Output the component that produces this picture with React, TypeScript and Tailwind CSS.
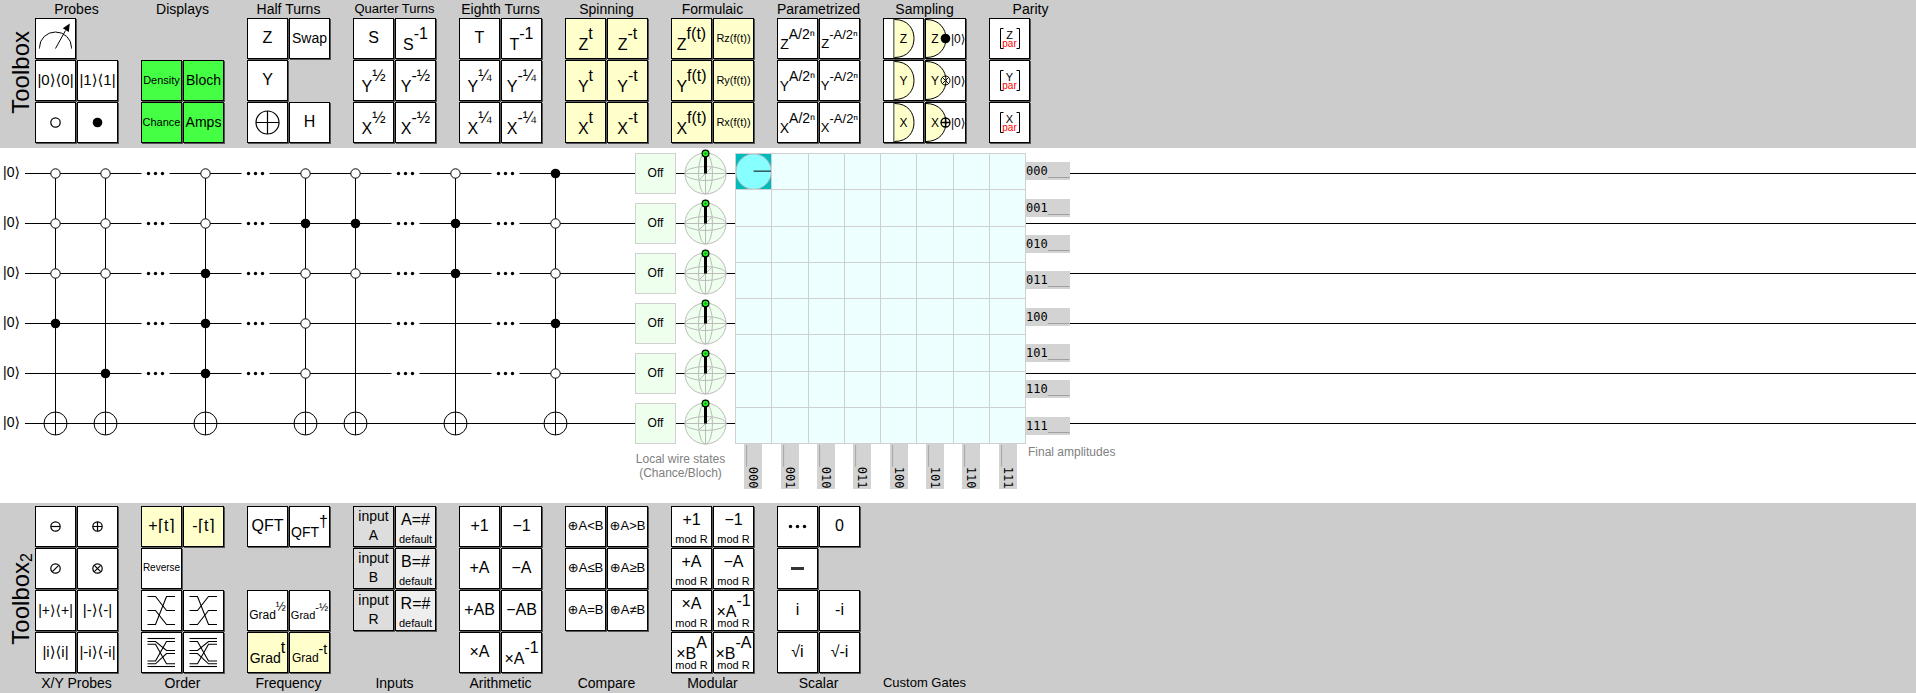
import React from "react";

type Gate = {
  t?: string;
  sup?: string;
  sub?: string;
  size?: string;
  supSize?: string;
  drop?: string;
  bg?: string;
  art?: React.ReactNode;
  name?: string;
} | null;

type Group = { title: string; titleSize?: string; gates: Gate[] };

const YELLOW = "bg-[#ffffcc]";
const GREEN = "bg-[#44ff44]";
const INPUT = "bg-[#dddddd]";
const DEFAULT = "bg-[#eeeeee]";

function Art({ children }: { children: React.ReactNode }) {
  return (
    <svg viewBox="0 0 39 39" className="block h-[39px] w-[39px]" fill="none" stroke="black" aria-hidden="true">
      {children}
    </svg>
  );
}

const dot = (
  <Art>
    <circle cx="19.5" cy="19.5" r="4.8" fill="black" stroke="none" />
  </Art>
);

function Circled({ d, r = 4.7 }: { d?: string; r?: number }) {
  return (
    <Art>
      <circle cx="19.5" cy="19.5" r={r} strokeWidth="1.2" />
      {d && <path d={d} strokeWidth="1.2" />}
    </Art>
  );
}

function Meter() {
  return (
    <Art>
      <path d="M3.5 29.5V28.5A16 15.5 0 0 1 35.5 28.5V29.5" />
      <path d="M19.5 29.5L29.5 11.5" />
      <path d="M33.8 4.5L32.8 13L26.8 9.2Z" fill="black" stroke="none" />
    </Art>
  );
}

function Wires({ left, right }: { left: number[]; right: number[] }) {
  return (
    <Art>
      {left.map((y, i) => (
        <path key={i} d={`M5.5 ${y}H13.5L24.5 ${right[i]}H33`} strokeWidth="1.1" />
      ))}
    </Art>
  );
}

const svgText = "fill-black stroke-none font-['Liberation_Sans','DejaVu_Sans',sans-serif]";

function Detector({ axis }: { axis: string }) {
  return (
    <Art>
      <path d="M10 0.5H13A17.5 19 0 0 1 13 38.5H10Z" fill="#ffffcc" stroke="none" />
      <path d="M10 0V39" stroke="#777" strokeWidth="2" />
      <path d="M10.5 0.5C24 0.5 30 10 30 19.5S24 38.5 10.5 38.5" fill="#ffffcc" />
      <text x="19.5" y="24" textAnchor="middle" className={`text-[12px] ${svgText}`}>{axis}</text>
    </Art>
  );
}

function ResetDetector({ axis, mark }: { axis: string; mark: React.ReactNode }) {
  return (
    <Art>
      <path d="M0 0.5C13.5 0.5 20 10 20 19.5S13.5 38.5 0 38.5" fill="#ffffcc" />
      <text x="9" y="24" textAnchor="middle" className={`text-[12px] ${svgText}`}>{axis}</text>
      {mark}
      <text x="25" y="24" className={`text-[12px] ${svgText}`}>|0⟩</text>
    </Art>
  );
}

function Parity({ axis }: { axis: string }) {
  return (
    <Art>
      <path d="M13.5 9.5H10.5V29.5H13.5M26.5 9.5H29.5V29.5H26.5" />
      <text x="19.5" y="20" textAnchor="middle" className={`text-[11px] ${svgText}`}>{axis}</text>
      <text x="19.5" y="28" textAnchor="middle" className="fill-[#ff0000] stroke-none text-[10px] font-['Liberation_Sans',sans-serif]">par</text>
    </Art>
  );
}

const topGroups: Group[] = [
  {
    title: "Probes",
    gates: [
      { art: <Meter />, name: "Measure" }, null,
      { t: "|0⟩⟨0|", size: "text-[15px]" }, { t: "|1⟩⟨1|", size: "text-[15px]" },
      { art: <Circled />, name: "Anti-control" }, { art: dot, name: "Control" },
    ],
  },
  {
    title: "Displays",
    gates: [
      null, null,
      { t: "Density", size: "text-[11px]", bg: GREEN }, { t: "Bloch", size: "text-[14px]", bg: GREEN },
      { t: "Chance", size: "text-[11px]", bg: GREEN }, { t: "Amps", size: "text-[14px]", bg: GREEN },
    ],
  },
  {
    title: "Half Turns",
    gates: [
      { t: "Z" }, { t: "Swap", size: "text-[14px]" },
      { t: "Y" }, null,
      { art: <Circled r={11.5} d="M8 19.5H31M19.5 8V31" />, name: "Not" }, { t: "H" },
    ],
  },
  {
    title: "Quarter Turns",
    titleSize: "text-[13px]",
    gates: [
      { t: "S" }, { t: "S", sup: "-1" },
      { t: "Y", sup: "½" }, { t: "Y", sup: "-½" },
      { t: "X", sup: "½" }, { t: "X", sup: "-½" },
    ],
  },
  {
    title: "Eighth Turns",
    gates: [
      { t: "T" }, { t: "T", sup: "-1" },
      { t: "Y", sup: "¼" }, { t: "Y", sup: "-¼" },
      { t: "X", sup: "¼" }, { t: "X", sup: "-¼" },
    ],
  },
  {
    title: "Spinning",
    gates: ["Z", "Y", "X"].flatMap((a): Gate[] => [
      { t: a, sup: "t", bg: YELLOW }, { t: a, sup: "-t", bg: YELLOW },
    ]),
  },
  {
    title: "Formulaic",
    gates: ["Z", "Y", "X"].flatMap((a): Gate[] => [
      { t: a, sup: "f(t)", bg: YELLOW }, { t: `R${a.toLowerCase()}(f(t))`, size: "text-[11px]", bg: YELLOW },
    ]),
  },
  {
    title: "Parametrized",
    gates: ["Z", "Y", "X"].flatMap((a): Gate[] => [
      { t: a, sup: "A/2ⁿ", size: "text-[14px]", supSize: "text-[14px]", drop: "pt-[10px]" },
      { t: a, sup: "-A/2ⁿ", size: "text-[13px]", supSize: "text-[13px]", drop: "pt-[9px]" },
    ]),
  },
  {
    title: "Sampling",
    gates: [
      { art: <Detector axis="Z" />, name: "Z detector" },
      { art: <ResetDetector axis="Z" mark={<circle cx="19.5" cy="19.5" r="4.8" fill="black" stroke="none" />} />, name: "Z detector with reset" },
      { art: <Detector axis="Y" />, name: "Y detector" },
      { art: <ResetDetector axis="Y" mark={<path d="M15 19.5a4.5 4.5 0 1 0 9 0a4.5 4.5 0 1 0 -9 0M16.3 16.3L22.7 22.7M16.3 22.7L22.7 16.3" />} />, name: "Y detector with reset" },
      { art: <Detector axis="X" />, name: "X detector" },
      { art: <ResetDetector axis="X" mark={<path d="M15 19.5a4.5 4.5 0 1 0 9 0a4.5 4.5 0 1 0 -9 0M15 19.5H24M19.5 15V24" strokeWidth="1.3" />} />, name: "X detector with reset" },
    ],
  },
  {
    title: "Parity",
    gates: [
      { art: <Parity axis="Z" />, name: "Z parity" }, null,
      { art: <Parity axis="Y" />, name: "Y parity" }, null,
      { art: <Parity axis="X" />, name: "X parity" }, null,
    ],
  },
];

const THREE = [5.5, 19.5, 33.5];
const SPLIT = [5.5, 8.5, 11.2, 28, 30.8, 33.5];
const WOVEN = [5.5, 17.5, 30.8, 8.5, 20.5, 33.5];

const bottomGroups: Group[] = [
  {
    title: "X/Y Probes",
    gates: [
      { art: <Circled d="M15 19.5H24" />, name: "Minus control" }, { art: <Circled d="M15 19.5H24M19.5 15V24" />, name: "Plus control" },
      { art: <Circled d="M16.3 22.7L22.7 16.3" />, name: "Anti cross control" }, { art: <Circled d="M16.3 22.7L22.7 16.3M16.3 16.3L22.7 22.7" />, name: "Cross control" },
      { t: "|+⟩⟨+|", size: "text-[14px]" }, { t: "|-⟩⟨-|", size: "text-[15px]" },
      { t: "|i⟩⟨i|", size: "text-[15px]" }, { t: "|-i⟩⟨-i|", size: "text-[15px]" },
    ],
  },
  {
    title: "Order",
    gates: [
      { t: "+⌈t⌉", bg: YELLOW }, { t: "-⌈t⌉", bg: YELLOW },
      { t: "Reverse", size: "text-[10px]" }, null,
      { art: <Wires left={THREE} right={[19.5, 33.5, 5.5]} />, name: "Rotate down" },
      { art: <Wires left={THREE} right={[33.5, 5.5, 19.5]} />, name: "Rotate up" },
      { art: <Wires left={SPLIT} right={WOVEN} />, name: "Interleave" },
      { art: <Wires left={WOVEN} right={SPLIT} />, name: "Deinterleave" },
    ],
  },
  {
    title: "Frequency",
    gates: [
      { t: "QFT" }, { t: "QFT", sup: "†", size: "text-[14px]", drop: "pt-[10px]" },
      null, null,
      { t: "Grad", sup: "½", size: "text-[12px]", supSize: "text-[12px]", drop: "pt-[8px]" },
      { t: "Grad", sup: "-½", size: "text-[11px]", supSize: "text-[11px]", drop: "pt-[8px]" },
      { t: "Grad", sup: "t", size: "text-[14px]", bg: YELLOW, drop: "pt-[10px]" },
      { t: "Grad", sup: "-t", size: "text-[12px]", supSize: "text-[14px]", bg: YELLOW, drop: "pt-[9px]" },
    ],
  },
  {
    title: "Inputs",
    gates: ["A", "B", "R"].flatMap((a): Gate[] => [
      { t: "input", sub: a, size: "text-[14px]", bg: INPUT }, { t: `${a}=#`, sub: "default", bg: DEFAULT },
    ]),
  },
  {
    title: "Arithmetic",
    gates: [
      { t: "+1" }, { t: "−1" }, { t: "+A" }, { t: "−A" },
      { t: "+AB" }, { t: "−AB" }, { t: "×A" }, { t: "×A", sup: "-1" },
    ],
  },
  {
    title: "Compare",
    gates: ["<", ">", "≤", "≥", "=", "≠"].map((op): Gate => ({ t: `⊕A${op}B`, size: "text-[13px]" })),
  },
  {
    title: "Modular",
    gates: [
      { t: "+1", sub: "mod R" }, { t: "−1", sub: "mod R" },
      { t: "+A", sub: "mod R" }, { t: "−A", sub: "mod R" },
      { t: "×A", sub: "mod R" }, { t: "×A", sup: "-1", sub: "mod R" },
      { t: "×B", sup: "A", sub: "mod R" }, { t: "×B", sup: "-A", sub: "mod R" },
    ],
  },
  {
    title: "Scalar",
    gates: [
      {
        art: (
          <Art>
            <g fill="black" stroke="none">
              <circle cx="12.5" cy="19.5" r="1.7" />
              <circle cx="19.5" cy="19.5" r="1.7" />
              <circle cx="26.5" cy="19.5" r="1.7" />
            </g>
          </Art>
        ),
        name: "Spacer",
      },
      { t: "0" },
      { art: <Art><path d="M13 19.5H26" stroke="#333" strokeWidth="3" /></Art>, name: "Identity" }, null,
      { t: "i" }, { t: "-i" },
      { t: "√i" }, { t: "√-i" },
    ],
  },
  { title: "Custom Gates", titleSize: "text-[13px]", gates: [] },
];

function GateFace({ gate }: { gate: NonNullable<Gate> }) {
  if (gate.art) return <>{gate.art}</>;
  const size = gate.size ?? "text-[16px]";
  const power = gate.sup && (
    <span className="flex items-start pt-px">
      <span className={`${gate.drop ?? "pt-[11px]"} ${size}`}>{gate.t}</span>
      <span className={gate.supSize ?? "text-[16px]"}>{gate.sup}</span>
    </span>
  );
  if (gate.sub) {
    const caption = gate.sub === "default" || gate.sub === "mod R";
    return (
      <span className={`flex h-full flex-col items-center justify-between pb-px ${caption ? "pt-[5px]" : "pt-px"}`}>
        {gate.sup ? <span className="-mt-1 -mb-3">{power}</span> : <span className={size}>{gate.t}</span>}
        {caption ? (
          <span className="text-[11px] leading-[12px]">{gate.sub}</span>
        ) : (
          <span className={`pb-[2px] ${size}`}>{gate.sub}</span>
        )}
      </span>
    );
  }
  return power || <span className={`pb-[2px] ${size}`}>{gate.t}</span>;
}

function GateGroup({ group, titleBelow }: { group: Group; titleBelow?: boolean }) {
  return (
    <section className={`flex w-[83px] shrink-0 items-center ${titleBelow ? "flex-col-reverse justify-start gap-[2px]" : "flex-col gap-px"}`}>
      <h2 className={`whitespace-nowrap leading-4 ${group.titleSize ?? "text-[14px]"}`}>{group.title}</h2>
      <div className="grid w-full flex-1 auto-rows-[41px] grid-cols-[41px_41px] gap-px">
        {group.gates.map((gate, i) =>
          gate ? (
            <button
              key={i}
              type="button"
              aria-label={gate.name}
              className={`flex items-center justify-center overflow-visible whitespace-nowrap border border-black leading-4 shadow-[1px_1px_0_#555] ${gate.bg ?? "bg-white"}`}
            >
              <GateFace gate={gate} />
            </button>
          ) : (
            <span key={i} />
          ),
        )}
      </div>
    </section>
  );
}

function Toolbox({ label, groups, titleBelow }: { label: React.ReactNode; groups: Group[]; titleBelow?: boolean }) {
  return (
    <div className={`flex bg-[#cccccc] ${titleBelow ? "pt-[3px] pb-[2px]" : "pt-px pb-[5px]"}`}>
      <div className="flex w-[35px] shrink-0 items-center justify-center pl-[6px]">
        <h1 className="rotate-180 whitespace-nowrap text-[24px] leading-7 [writing-mode:vertical-rl]">{label}</h1>
      </div>
      <div className="flex gap-[23px]">
        {groups.map((group) => (
          <GateGroup key={group.title} group={group} titleBelow={titleBelow} />
        ))}
      </div>
    </div>
  );
}

const WIRES = [0, 1, 2, 3, 4, 5];

/* One string per column: o = anti-control, x = control, - = untouched, n = not, . = spacer */
const COLUMNS = ["ooox-n", "ooo-xn", ".....", "ooxxxn", ".....", "oxooon", "oxo--n", ".....", "oxx--n", ".....", "xooxon"];

function CircuitDrawing() {
  return (
    <svg viewBox="0 0 610 300" className="block h-[300px] w-[610px] shrink-0" fill="none" stroke="black" aria-hidden="true">
      {COLUMNS.map((column, c) => {
        const x = 30.5 + c * 50;
        if (column[0] === ".") {
          return column.split("").map((_, r) => (
            <g key={`${c}-${r}`} fill="black" stroke="none">
              <rect x={x - 14} y={r * 50 + 20} width="28" height="11" fill="white" />
              {[-7, 0, 7].map((dx) => (
                <circle key={dx} cx={x + dx} cy={r * 50 + 25.5} r="1.7" />
              ))}
            </g>
          ));
        }
        return (
          <g key={c}>
            <path d={`M${x} 25.5V287`} />
            {column.split("").map((kind, r) => {
              const y = r * 50 + 25.5;
              if (kind === "o") return <circle key={r} cx={x} cy={y} r="4.7" fill="white" />;
              if (kind === "x") return <circle key={r} cx={x} cy={y} r="4.8" fill="black" stroke="none" />;
              if (kind === "n") return <circle key={r} cx={x} cy={y} r="11.5" />;
              return null;
            })}
          </g>
        );
      })}
    </svg>
  );
}

function Bloch() {
  return (
    <svg viewBox="0 0 41 41" className="block h-[41px] w-[41px] overflow-visible" fill="none" stroke="#bbbbbb" aria-hidden="true">
      <circle cx="20.5" cy="20.5" r="20.5" fill="#eeffee" />
      <ellipse cx="20.5" cy="20.5" rx="20.5" ry="7" />
      <ellipse cx="20.5" cy="20.5" rx="7" ry="20.5" />
      <path d="M0 20.5H41M20.5 0V41M14.5 26.5L26.5 14.5" />
      <path d="M20.5 20.5V3" stroke="black" strokeWidth="3" />
      <circle cx="20.5" cy="0.5" r="3.4" fill="#22ee22" stroke="black" strokeWidth="1.2" />
      <circle cx="20.5" cy="0.5" r="1" fill="#118811" stroke="none" />
    </svg>
  );
}

const STATES = ["000", "001", "010", "011", "100", "101", "110", "111"];

function Amplitudes() {
  return (
    <div className="grid h-[291px] grid-cols-8 grid-rows-8 border-l border-t border-[#d0d0d0] bg-[#eeffff]">
      {Array.from({ length: 64 }, (_, i) => (
        <div key={i} className="border-b border-r border-[#d0d0d0]">
          {i === 0 && (
            <svg viewBox="0 0 36 36" className="block h-full w-full bg-[#00bbbb]" fill="none" aria-hidden="true">
              <circle cx="18" cy="18" r="18" fill="#88ffff" stroke="#bbbbbb" />
              <path d="M18 17.5H36" stroke="black" />
            </svg>
          )}
        </div>
      ))}
    </div>
  );
}

const stateLabel = "bg-[#d3d3d3] font-['DejaVu_Sans_Mono',monospace] text-[12px] text-black";

function Circuit() {
  return (
    <main className="relative bg-white pb-[14px] text-[12px]">
      <div className="absolute inset-x-0 top-0 flex flex-col gap-[49px] pl-[25px] pt-[25px]" aria-hidden="true">
        {WIRES.map((w) => (
          <div key={w} className="h-px bg-black" />
        ))}
      </div>
      <div className="relative flex items-start">
        <div className="flex w-[25px] shrink-0 flex-col gap-[9px] pt-[5px] pl-[3px] text-[14px] leading-4">
          {WIRES.map((w) => (
            <span key={w} className="flex h-[41px] items-center pb-[3px]">|0⟩</span>
          ))}
        </div>
        <CircuitDrawing />
        <div className="mr-[9px] w-[91px] shrink-0 pt-[5px]">
          <div className="flex flex-col gap-[9px]">
            {WIRES.map((w) => (
              <div key={w} className="flex gap-[9px]">
                <div className="flex h-[41px] w-[41px] items-center justify-center border border-[#d0d0d0] bg-[#eeffee] pb-px">Off</div>
                <Bloch />
              </div>
            ))}
          </div>
          <p className="whitespace-nowrap pt-2 text-center leading-[14px] text-[#808080]">
            Local wire states
            <br />
            (Chance/Bloch)
          </p>
        </div>
        <div className="w-[291px] shrink-0 pt-[5px]">
          <Amplitudes />
          <div className="grid grid-cols-8">
            {STATES.map((s) => (
              <div key={s} className="flex justify-center">
                <span className={`pb-px pt-px leading-[18px] [writing-mode:vertical-rl] ${stateLabel}`}>
                  <span className="text-[#777777]">___</span>
                  {s}
                </span>
              </div>
            ))}
          </div>
        </div>
        <div className="shrink-0 pt-[5px]">
          <div className="grid h-[291px] grid-rows-8">
            {STATES.map((s) => (
              <div key={s} className="flex items-center">
                <span className={`pr-px leading-[18px] ${stateLabel}`}>
                  {s}
                  <span className="text-[#777777]">___</span>
                </span>
              </div>
            ))}
          </div>
          <p className="whitespace-nowrap pl-[2px] pt-px leading-[14px] text-[#808080]">Final amplitudes</p>
        </div>
      </div>
    </main>
  );
}

export default function App() {
  return (
    <div className="overflow-x-hidden bg-white font-['Liberation_Sans','DejaVu_Sans',sans-serif] text-black">
      <Toolbox label="Toolbox" groups={topGroups} />
      <Circuit />
      <Toolbox
        label={<>Toolbox<span className="align-sub text-[16px] leading-none">2</span></>}
        groups={bottomGroups}
        titleBelow
      />
    </div>
  );
}
